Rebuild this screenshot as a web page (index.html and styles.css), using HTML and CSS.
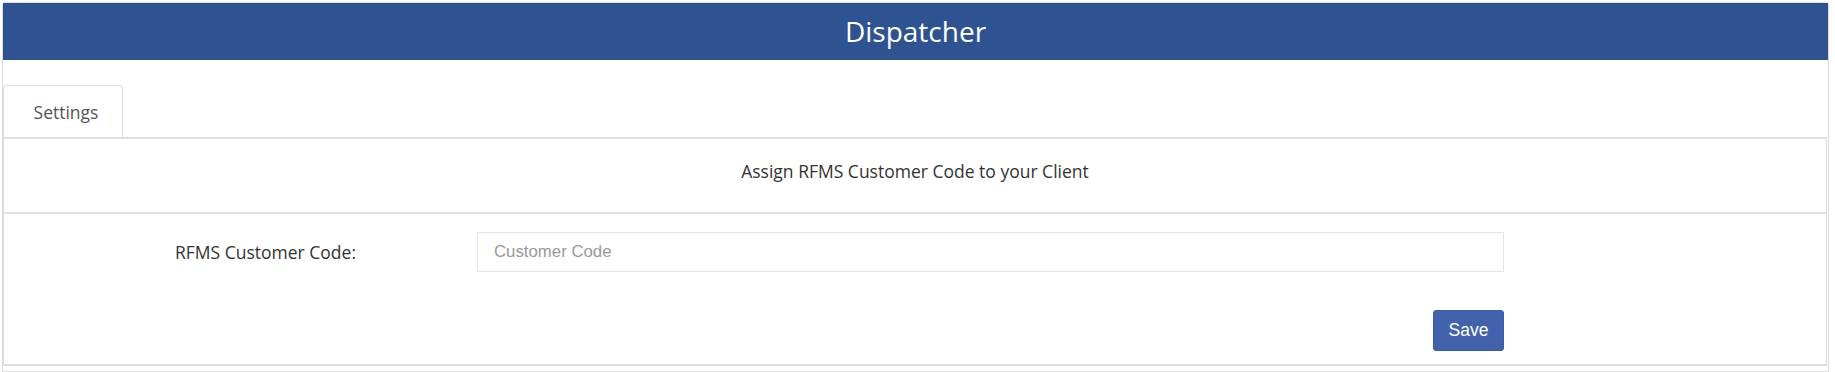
FILE: index.html
```html
<!DOCTYPE html>
<html>
<head>
<meta charset="utf-8">
<link rel="stylesheet" href="styles.css">
</head>
<body>
<div class="panel">
  <div class="panel-header">Dispatcher</div>
  <div class="panel-body">
    <div class="tabs">
      <div class="tab">Settings</div>
    </div>
    <div class="tab-content">
      <div class="title-row">Assign RFMS Customer Code to your Client</div>
      <div class="form">
        <label class="label" for="code">RFMS Customer Code:</label>
        <input class="input" id="code" type="text" placeholder="Customer Code">
        <div class="actions">
          <button class="btn">Save</button>
        </div>
      </div>
    </div>
  </div>
</div>
</body>
</html>
```

FILE: styles.css
```css
html, body {
  margin: 0;
  padding: 0;
  background: #fff;
}
body {
  padding: 2px 0 0 2px;
  font-family: "Open Sans", "Liberation Sans", sans-serif;
  color: #333;
}
.panel {
  width: 1827px;
  box-sizing: border-box;
  border: 1px solid #dcdcdc;
  border-radius: 3px 3px 0 0;
}
.panel-header {
  height: 57px;
  background: #2f5391;
  color: #fff;
  font-size: 28px;
  line-height: 57px;
  text-align: center;
}
.panel-body {
  padding: 25px 1px 5px 0;
}
.tabs {
  display: flex;
  height: 52px;
  border-bottom: 2px solid #dfdfdf;
}
.tab {
  width: 120px;
  box-sizing: border-box;
  border: 1px solid #dcdcdc;
  border-bottom: none;
  border-radius: 4px 4px 0 0;
  font-size: 17.5px;
  color: #555;
  text-align: center;
  line-height: 52px;
  padding-left: 6px;
}
.tab-content {
  border: 1px solid #dcdcdc;
  border-top: none;
  border-bottom-width: 2px;
}
.title-row {
  height: 73px;
  line-height: 64px;
  text-align: center;
  font-size: 17.5px;
  color: #333;
  border-bottom: 2px solid #e0e0e0;
}
.form {
  display: grid;
  grid-template-columns: 473px 1027px;
  padding: 18px 0 13px 0;
  row-gap: 38px;
}
.label {
  padding-left: 171px;
  font-size: 17.5px;
  color: #333;
  align-self: center;
  line-height: 40px;
}
.input {
  box-sizing: border-box;
  height: 40px;
  border: 1px solid #e6e6e6;
  padding: 0 16px;
  font-family: "Liberation Sans", Arial, sans-serif;
  font-size: 16.8px;
  color: #555;
  outline: none;
}
.input::placeholder {
  color: #999;
}
.actions {
  grid-column: 2;
  display: flex;
  justify-content: flex-end;
}
.btn {
  width: 71px;
  height: 41px;
  background: #4262ab;
  color: #fff;
  border: 1px solid #3d5ca3;
  border-radius: 3px;
  font-family: "Liberation Sans", Arial, sans-serif;
  font-size: 17.5px;
  padding: 0;
}
```
